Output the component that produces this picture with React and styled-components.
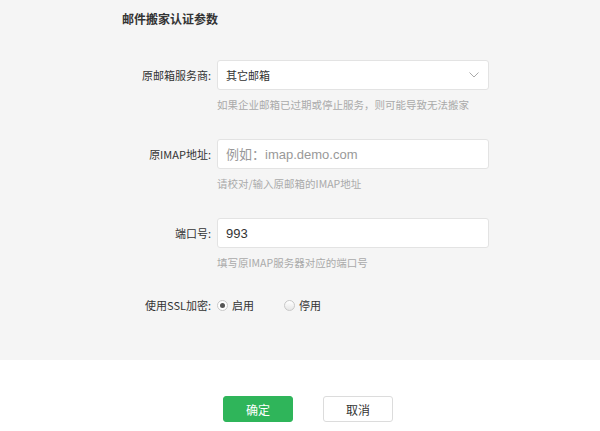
import React from "react";
import styled, { createGlobalStyle } from "styled-components";

const Global = createGlobalStyle`
  html, body { margin: 0; padding: 0; background: #fff; }
  body { font-family: "Microsoft YaHei", "Noto Sans CJK SC", "Liberation Sans", sans-serif; color: #333; }
  * { box-sizing: border-box; }
`;

const Page = styled.div`
  width: 600px;
  height: 431px;
  display: flex;
  flex-direction: column;
`;

const Panel = styled.div`
  background: #f5f5f5;
  height: 360px;
  padding-top: 10px;
`;

const Title = styled.h2`
  margin: 0 0 32px 122px;
  font-size: 12px;
  line-height: 18px;
  font-weight: bold;
  color: #333;
`;

const Field = styled.div`
  display: grid;
  grid-template-columns: 211px 272px;
  column-gap: 6px;
  row-gap: 9px;
  margin-bottom: ${(p) => p.$mb ?? 28}px;
`;

const Label = styled.label`
  text-align: right;
  font-size: 11px;
  color: #333;
  align-self: center;
  white-space: nowrap;
`;

const Box = styled.div`
  position: relative;
  height: 30px;
  background: #fff;
  border: 1px solid #e3e3e3;
  border-radius: 3px;
  display: flex;
  align-items: center;
  padding: 0 8px;
`;

const SelectText = styled.span`
  font-size: 11px;
  color: #333;
`;

const Chevron = styled.svg`
  position: absolute;
  right: 9px;
  top: 11px;
`;

const Input = styled.input`
  height: 30px;
  width: 100%;
  background: #fff;
  border: 1px solid #e3e3e3;
  border-radius: 3px;
  padding: 0 8px;
  font-family: "Liberation Sans", "Noto Sans CJK SC", sans-serif;
  font-size: 13px;
  color: #333;
  outline: none;
  &::placeholder { color: #999; }
`;

const Hint = styled.div`
  grid-column: 2;
  font-size: 10.5px;
  line-height: 12px;
  color: #aaa;
`;

const Radios = styled.div`
  display: flex;
  align-items: center;
  gap: 30px;
`;

const RadioItem = styled.span`
  display: inline-flex;
  align-items: center;
  gap: 4px;
  font-size: 11px;
  color: #333;
`;

const RadioDot = styled.span`
  width: 11px;
  height: 11px;
  border-radius: 50%;
  border: 1px solid #c8c8c8;
  background: ${(p) => (p.$on ? "#fff" : "linear-gradient(#fff, #e6e6e6)")};
  display: inline-flex;
  align-items: center;
  justify-content: center;
  &::after {
    content: "";
    width: 5px;
    height: 5px;
    border-radius: 50%;
    background: ${(p) => (p.$on ? "#555" : "transparent")};
  }
`;

const Footer = styled.div`
  flex: 1;
  display: flex;
  justify-content: center;
  align-items: flex-start;
  padding-top: 36px;
  gap: 30px;
  padding-left: 16px;
`;

const Button = styled.button`
  width: 70px;
  height: 26px;
  border-radius: 3px;
  font-size: 12px;
  font-family: "Microsoft YaHei", "Noto Sans CJK SC", sans-serif;
  cursor: pointer;
  border: 1px solid ${(p) => (p.$primary ? "#2fb55a" : "#dcdcdc")};
  background: ${(p) => (p.$primary ? "#2fb55a" : "#fff")};
  color: ${(p) => (p.$primary ? "#fff" : "#333")};
`;

export default function App() {
  return (
    <Page>
      <Global />
      <Panel>
        <Title>邮件搬家认证参数</Title>
        <Field>
          <Label>原邮箱服务商:</Label>
          <Box>
            <SelectText>其它邮箱</SelectText>
            <Chevron width="10" height="6" viewBox="0 0 10 6">
              <path d="M0.5 0.5 L5 5 L9.5 0.5" fill="none" stroke="#aaa" strokeWidth="1" />
            </Chevron>
          </Box>
          <Hint>如果企业邮箱已过期或停止服务，则可能导致无法搬家</Hint>
        </Field>
        <Field>
          <Label>原IMAP地址:</Label>
          <Input placeholder="例如：imap.demo.com" />
          <Hint>请校对/输入原邮箱的IMAP地址</Hint>
        </Field>
        <Field>
          <Label>端口号:</Label>
          <Input defaultValue="993" />
          <Hint>填写原IMAP服务器对应的端口号</Hint>
        </Field>
        <Field>
          <Label>使用SSL加密:</Label>
          <Radios>
            <RadioItem><RadioDot $on />启用</RadioItem>
            <RadioItem><RadioDot />停用</RadioItem>
          </Radios>
        </Field>
      </Panel>
      <Footer>
        <Button $primary>确定</Button>
        <Button>取消</Button>
      </Footer>
    </Page>
  );
}
